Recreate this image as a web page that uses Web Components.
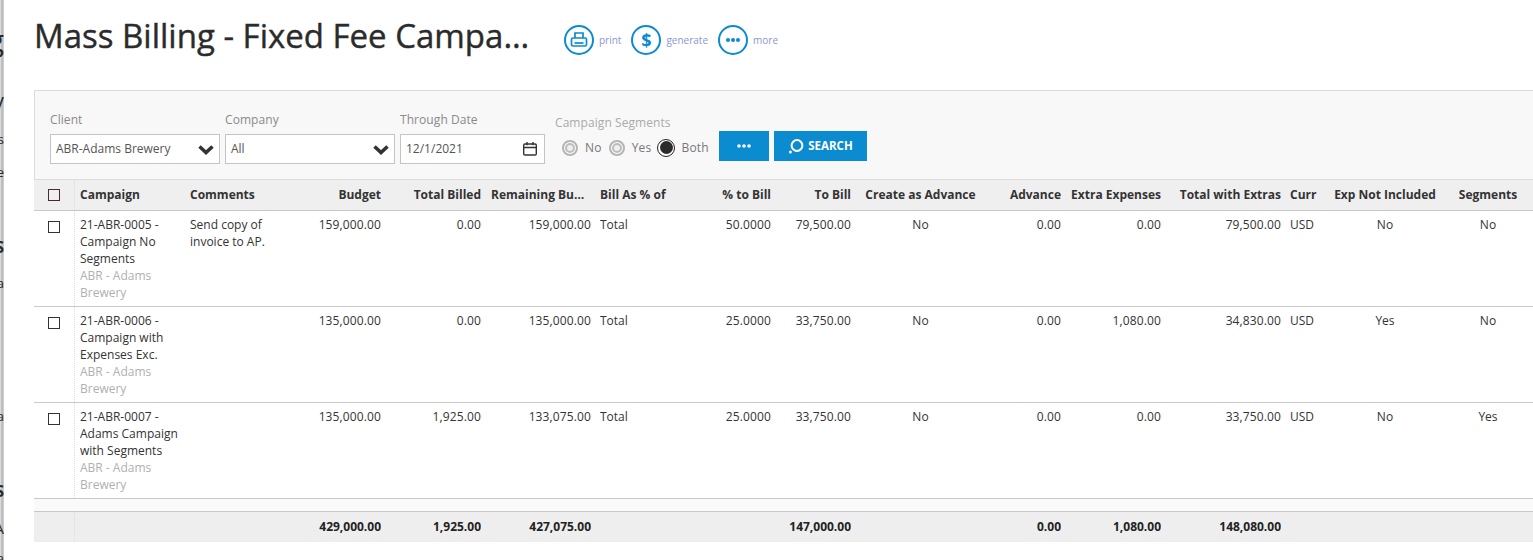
<!DOCTYPE html>
<html lang="en"><head><meta charset="utf-8"><title>Mass Billing</title>
<style>
html,body{margin:0;padding:0;background:#fff;height:100%;overflow:hidden}
body{font-family:"Open Sans",sans-serif;font-size:12px;color:#333}
</style></head><body>
<mb-page>
  <mb-backdrop slot="backdrop"></mb-backdrop>
  <mb-header title-text="Mass Billing - Fixed Fee Campaigns">
    <mb-action label="print" icon="print"></mb-action>
    <mb-action label="generate" icon="dollar"></mb-action>
    <mb-action label="more" icon="more"></mb-action>
  </mb-header>
  <mb-filters>
    <mb-field label="Client" w="170"><mb-select value="ABR-Adams Brewery"></mb-select></mb-field>
    <mb-field label="Company" w="170"><mb-select value="All"></mb-select></mb-field>
    <mb-field label="Through Date" w="145"><mb-select value="12/1/2021" kind="date"></mb-select></mb-field>
    <mb-segments></mb-segments>
    <mb-button kind="more"></mb-button>
    <mb-button kind="search">SEARCH</mb-button>
  </mb-filters>
  <mb-grid></mb-grid>
</mb-page>
<script>
const shadow=(el,html)=>{el.attachShadow({mode:'open'}).innerHTML=html;};
const chevron='<svg width="18" height="11" viewBox="0 0 18 11"><path d="M2.5 2.5 9 8.5l6.5-6" fill="none" stroke="#333" stroke-width="3.6" stroke-linejoin="miter"/></svg>';
const calendar='<svg width="16" height="16" viewBox="0 0 16 16" fill="none" stroke="#333" stroke-width="1.4"><rect x="1.7" y="3" width="12.6" height="11" rx="1.2"/><path d="M1.7 6.5h12.6M5 1v3.2M11 1v3.2"/></svg>';
const icons={
 print:'<svg width="18" height="18" viewBox="0 0 18 18" fill="none" stroke="#0b8bd0" stroke-width="1.7"><path d="M5 7V2h8v5"/><rect x="1.5" y="7" width="15" height="8" rx="1.5"/><path d="M4.5 12h9"/></svg>',
 dollar:'<span class="d">$</span>',
 more:'<svg width="16" height="6" viewBox="0 0 16 6" fill="#0b8bd0"><circle cx="3" cy="3" r="2"/><circle cx="8" cy="3" r="2"/><circle cx="13" cy="3" r="2"/></svg>'
};
customElements.define('mb-page',class extends HTMLElement{constructor(){super();shadow(this,`<style>
:host{display:flex;width:1533px;height:560px;overflow:hidden;background:#fff}
.main{flex:1;min-width:0;padding-left:30px;display:flex;flex-direction:column}
</style><slot name="backdrop"></slot><div class="main"><slot></slot></div>`);}});
customElements.define('mb-backdrop',class extends HTMLElement{constructor(){super();
const f=[['g',22,30,400],['V',92,20,400],['s',132,13,400],['e',165,13,400],['S',238,16,700],['a',276,13,400],['a',409,13,400],['S',482,16,700],['A',519,15,400],['a',551,13,400]];
shadow(this,`<style>
:host{display:block;position:relative;flex:0 0 4px;width:4px;height:560px;overflow:hidden;background:#fff}
span{position:absolute;right:0;line-height:1.2;color:#2a2a2a;font-family:"Open Sans",sans-serif}
i{position:absolute;inset:0;background:linear-gradient(90deg,#e8e8e8 0,#bdbdbd 40%,#bdbdbd 75%,#dcdcdc 100%)}
</style><i></i>${f.map(a=>`<span style="top:${a[1]}px;font-size:${a[2]}px;font-weight:${a[3]}">${a[0]}</span>`).join('')}`);}});
customElements.define('mb-header',class extends HTMLElement{constructor(){super();shadow(this,`<style>
:host{display:flex;flex:0 0 90px;height:90px;box-sizing:border-box;padding-top:14px;align-items:flex-start}
h1{margin:0;font:400 33px/44px "Open Sans",sans-serif;color:#2b2b2b;-webkit-text-stroke:.4px #2b2b2b;width:500px;white-space:nowrap;overflow:hidden;text-overflow:ellipsis}
.acts{display:flex;margin-left:30px;padding-top:11px;gap:10px}
</style><h1></h1><div class="acts"><slot></slot></div>`);this.shadowRoot.querySelector('h1').textContent=this.getAttribute('title-text');}});
customElements.define('mb-action',class extends HTMLElement{constructor(){super();shadow(this,`<style>
:host{display:flex;align-items:center;gap:5px;font:400 10px/30px "Open Sans",sans-serif;color:#8c96d6}
.c{width:30px;height:30px;box-sizing:border-box;border:2px solid #0b8bd0;border-radius:50%;display:flex;align-items:center;justify-content:center}
.d{font:700 18px/1 "Open Sans",sans-serif;color:#0b8bd0}
</style><span class="c">${icons[this.getAttribute('icon')]}</span><span>${this.getAttribute('label')}</span>`);}});
customElements.define('mb-filters',class extends HTMLElement{constructor(){super();shadow(this,`<style>
:host{display:flex;flex:0 0 90px;height:90px;box-sizing:border-box;background:#f8f8f8;border:1px solid #dcdcdc;border-right:0;padding:0 0 0 15px;align-items:flex-start;gap:5px}
</style><slot></slot>`);}});
customElements.define('mb-field',class extends HTMLElement{constructor(){super();shadow(this,`<style>
:host{display:block;width:${this.getAttribute('w')}px;padding-top:20px;color:#8a8a8a;font:400 12px/17px "Open Sans",sans-serif}
.l{height:23px;letter-spacing:.07px}
</style><div class="l">${this.getAttribute('label')}</div><slot></slot>`);}});
customElements.define('mb-select',class extends HTMLElement{constructor(){super();const date=this.getAttribute('kind')==='date';shadow(this,`<style>
:host{display:flex;align-items:center;justify-content:space-between;height:30px;box-sizing:border-box;background:#fff;border:1px solid #c4c4c4;padding:0 ${date?'6px':'4px'} 0 5px;font:400 12px/17px "Open Sans",sans-serif;color:#555}
svg{display:block}
span{margin-bottom:2px}
</style><span>${this.getAttribute('value')}</span>${date?calendar:chevron}`);}});
customElements.define('mb-segments',class extends HTMLElement{constructor(){super();shadow(this,`<style>
:host{display:block;margin-left:5px;padding-top:23px;width:159px;color:#aaa;font:400 12px/17px "Open Sans",sans-serif;letter-spacing:.07px}
.r{display:flex;align-items:center;margin:8px 0 0 7px;color:#777;height:17px;letter-spacing:.2px}
.o{width:16px;height:16px;box-sizing:border-box;border-radius:50%;border:2px solid #b4b4b4;background:#fff;position:relative;margin-right:7px;flex:none}
.o::after{content:"";position:absolute;inset:1px;border-radius:50%;border:2px solid #bcbcbc;background:#efefef;box-sizing:border-box}
.o.on{width:18px;height:18px;margin-left:-1px;margin-right:6px;border:1.5px solid #222}
.o.on::after{inset:1.5px;border:0;background:#2b2b2b}
.t{margin-right:7px}
</style><div>Campaign Segments</div><div class="r"><span class="o"></span><span class="t">No</span><span class="o"></span><span class="t">Yes</span><span class="o on"></span><span>Both</span></div>`);}});
customElements.define('mb-button',class extends HTMLElement{constructor(){super();const s=this.getAttribute('kind')==='search';shadow(this,`<style>
:host{display:flex;align-items:center;justify-content:center;gap:4px;height:30px;margin-top:40px;width:${s?93:50}px;background:#0b8bd0;color:#fff;font:700 11.5px/1 "Open Sans",sans-serif}
</style>${s?'<svg width="16" height="16" viewBox="0 0 16 16" fill="none" stroke="#fff" stroke-width="2"><circle cx="9" cy="7.5" r="5.4"/><circle cx="2.4" cy="14" r="1.5" fill="#fff" stroke="none"/></svg>':'<svg width="16" height="6" viewBox="0 0 16 6" fill="#fff"><circle cx="3" cy="3" r="1.8"/><circle cx="8" cy="3" r="1.8"/><circle cx="13" cy="3" r="1.8"/></svg>'}<slot></slot>`);}});
const COLS='41px 110px 100px 101px 100px 110px 90px 90px 80px 129px 81px 100px 120px 39px 120px 86px';
customElements.define('mb-check',class extends HTMLElement{constructor(){super();shadow(this,`<style>
:host{display:block;width:12px;height:12px;box-sizing:border-box;border:1.5px solid #333;background:#fff;margin:5px 0 0 14px}
:host([h]){background:#f0f0f0;border-color:#4a2a28}
</style>`);}});
customElements.define('mb-row',class extends HTMLElement{constructor(){super();shadow(this,`<style>
:host{display:grid;grid-template-columns:${COLS};box-sizing:border-box;width:1499px}
:host([kind=head]){height:31px;background:#efefef;border-bottom:1px solid #c9c9c9;font-weight:700;color:#333}
:host([kind=body]){height:96px;border-bottom:1px solid #c9c9c9}
:host([kind=gap]){height:13px;background:#fafafa;border-bottom:1px solid #c9c9c9}
:host([kind=total]){height:30px;background:#eee;font-weight:700;color:#222}
</style><slot></slot>`);}});
customElements.define('mb-cell',class extends HTMLElement{constructor(){super();shadow(this,`<style>
:host{display:block;min-width:0;box-sizing:border-box;padding:5px 5px 0;font:inherit;line-height:17px}
:host([a=r]){text-align:right}
:host([a=c]){text-align:center}
:host([tight]){padding-left:4px}
:host([num]){letter-spacing:.12px}
:host([first]){border-right:1px dotted #dcdcdc;padding:0}
:host([pad=t]){padding-top:6px}
.e{white-space:nowrap;overflow:hidden;text-overflow:ellipsis}
::slotted(small){display:block;font-size:12px;color:#b0b0b0;font-weight:400}
</style><div class="e" style="white-space:${this.hasAttribute('wrap')?'normal':'nowrap'}"><slot></slot></div>`);}});
const A=['','l','l','r','r','r','l','r','r','c','r','r','r','l','c','c'];
const T=i=>(i==6||i==13)?' tight':'';
const N=i=>A[i]=='r'?' num':'';
const head=['','Campaign','Comments','Budget','Total Billed','Remaining Budget','Bill As % of','% to Bill','To Bill','Create as Advance','Advance','Extra Expenses','Total with Extras','Curr','Exp Not Included','Segments'];
const rows=[
 ['21-ABR-0005 - Campaign No Segments','Send copy of invoice to AP.','159,000.00','0.00','159,000.00','Total','50.0000','79,500.00','No','0.00','0.00','79,500.00','USD','No','No'],
 ['21-ABR-0006 - Campaign with Expenses Exc.','','135,000.00','0.00','135,000.00','Total','25.0000','33,750.00','No','0.00','1,080.00','34,830.00','USD','Yes','No'],
 ['21-ABR-0007 - Adams Campaign with Segments','','135,000.00','1,925.00','133,075.00','Total','25.0000','33,750.00','No','0.00','0.00','33,750.00','USD','No','Yes']];
const total=['','','429,000.00','1,925.00','427,075.00','','','147,000.00','','0.00','1,080.00','148,080.00','','',''];
customElements.define('mb-grid',class extends HTMLElement{constructor(){super();
const cell=(v,i,extra='')=>`<mb-cell a="${A[i]}"${T(i)} ${extra}>${v}</mb-cell>`;
let h=`<mb-row kind="head"><mb-cell first><mb-check h style="margin-top:9px"></mb-check></mb-cell>`+head.slice(1).map((v,i)=>cell(v,i+1,'pad="t"')).join('')+`</mb-row>`;
for(const r of rows){h+=`<mb-row kind="body"><mb-cell first><mb-check style="margin-top:10px"></mb-check></mb-cell>`+r.map((v,i)=>i==0?cell(v+'<small>ABR - Adams Brewery</small>',1,'wrap'):cell(v,i+1,(i==1?'wrap':'')+N(i+1))).join('')+`</mb-row>`;}
h+=`<mb-row kind="gap"></mb-row>`;
h+=`<mb-row kind="total"><mb-cell first></mb-cell>`+total.map((v,i)=>cell(v,i+1,'pad="t"')).join('')+`</mb-row>`;
shadow(this,`<style>:host{display:block;font:400 12px/17px "Open Sans",sans-serif;color:#333}</style>`+h);}});
</script>
</body></html>
